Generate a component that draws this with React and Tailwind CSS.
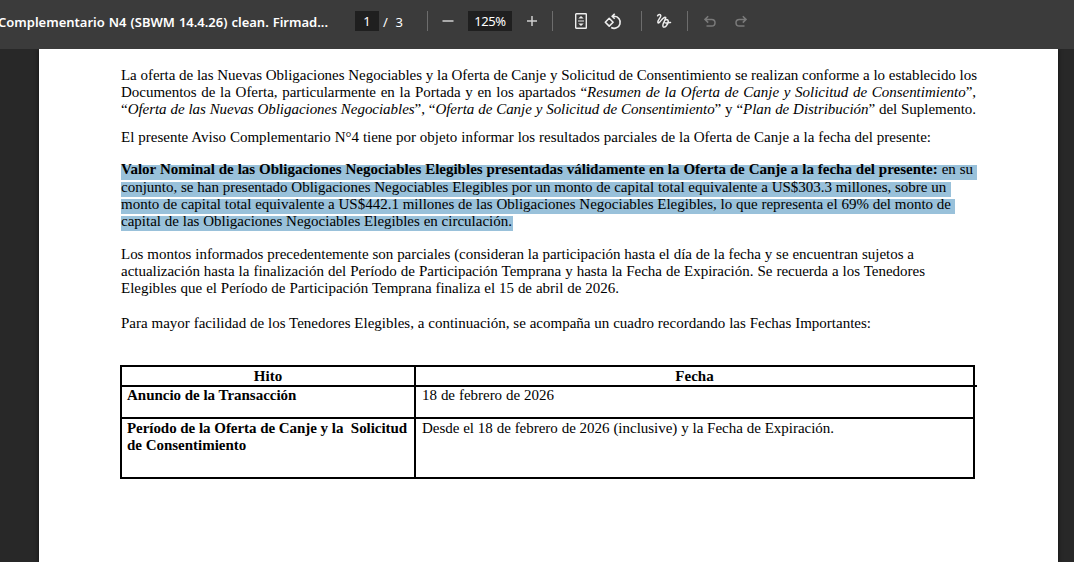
import React from "react";

const Line = ({ w, children, className = "tracking-[-0.02px]" }) => (
  <div
    className={`h-[17px] leading-[17px] whitespace-nowrap text-justify [text-align-last:justify] ${className}`}
    style={{ width: w }}
  >
    {children}
  </div>
);

const Marked = ({ w, pad, shift = "-mt-[3px]", gap = "", children }) => (
  <div className={`flex h-[15px] w-fit bg-[#99c1da] ${gap}`} style={{ paddingRight: pad }}>
    <Line w={w} className={shift}>{children}</Line>
  </div>
);

const Rule = ({ className = "" }) => <div className={`h-5 w-px shrink-0 bg-[#6d6d6d] ${className}`} />;

function Toolbar() {
  return (
    <header className="relative z-10 flex h-[49px] items-start bg-[#3b3b3b] pt-[11px] font-['Noto_Sans',sans-serif] text-white">
      <div className="-ml-[2px] h-5 w-[330px] shrink-0 text-[13px] leading-[22px] font-semibold whitespace-nowrap [text-align-last:justify]">
        Complementario N4 (SBWM 14.4.26) clean. Firmad...
      </div>
      <div className="ml-[27px] h-5 w-6 shrink-0 bg-[#1f1f1f] text-center text-[13px] leading-[21px]">1</div>
      <div className="ml-1 w-5 shrink-0 text-[13px] leading-[22px] [text-align-last:justify]">/ 3</div>
      <Rule className="ml-6" />
      <svg className="ml-[14px] h-5 w-3 shrink-0" viewBox="0 0 12 20" stroke="#d0d0d0" strokeWidth="1.5"><path d="M.5 10h11" /></svg>
      <div className="ml-[14px] h-5 w-11 shrink-0 bg-[#1f1f1f] text-center text-[13px] leading-[21px] tracking-[-0.4px]">125%</div>
      <svg className="ml-[14px] h-5 w-3 shrink-0" viewBox="0 0 12 20" stroke="#d0d0d0" strokeWidth="1.5"><path d="M1 10h10M6 5v10" /></svg>
      <Rule className="ml-[14px]" />
      <svg className="ml-[22px] h-5 w-3 shrink-0" viewBox="0 0 12 20" fill="none" stroke="#eeeeee">
        <rect x=".7" y="2.7" width="10.6" height="14.6" rx=".6" strokeWidth="1.4" />
        <path d="M3 10h6" strokeWidth="1" />
        <path d="M3.3 7.6 6 5 8.7 7.6zM3.3 12.4 6 15 8.7 12.4z" fill="#eeeeee" stroke="none" />
      </svg>
      <svg className="ml-[17px] h-5 w-[18px] shrink-0" viewBox="0 0 18 20" fill="none" stroke="#eeeeee" strokeWidth="1.6">
        <path d="M5.2 7.3 9.1 11.2 5.2 15.1 1.3 11.2z" strokeLinejoin="round" />
        <path d="M8 5.3h2.4a6 6 0 1 1-3.2 11.2M10.7 2.8 8.2 5.3l2.5 2.5" />
      </svg>
      <Rule className="ml-[19px]" />
      <svg className="ml-[14px] h-5 w-4 shrink-0" viewBox="0 0 16 20" fill="none" stroke="#eeeeee" strokeWidth="1.5" strokeLinecap="round" strokeLinejoin="round">
        <path d="M1.6 4.8C2.3 3.400 4.500 2.900 4.800 4.600 5.100 6.600 1.200 9.200 1.900 11.500c.9 2.500 4.500-5.200 7.100-5.300 2.700 0-3.200 6.300-2 9.100 1.300 2.600 5.400-1.900 5.200-5.200-.3-2.800-4.800-.9-3.900 1.200.8 1.700 3.500 0 6.200.2" />
      </svg>
      <Rule className="ml-[15px]" />
      <svg className="ml-4 h-5 w-3 shrink-0" viewBox="0 0 12 20" fill="none" stroke="#7a7a7a" strokeWidth="1.5">
        <path d="M4.2 5.200 1 8.400l3.200 3.200M1 8.400h6.700a3.300 3.300 0 0 1 0 6.600H2.500" />
      </svg>
      <svg className="ml-[19px] h-5 w-3 shrink-0" viewBox="0 0 12 20" fill="none" stroke="#7a7a7a" strokeWidth="1.5">
        <path d="M7.800 5.200 11 8.400l-3.200 3.200M11 8.400H4.300a3.300 3.300 0 0 0 0 6.600h5.200" />
      </svg>
    </header>
  );
}

export default function App() {
  return (
    <div className="h-[562px] w-[1074px] overflow-hidden bg-[#282828]">
      <Toolbar />
      <main className="ml-[39px] h-[513px] w-[1019px] bg-white pt-[18px] pl-[82px] font-['Liberation_Serif',serif] text-[15px] text-black shadow-[0_0_4px_#111]">
        <Line w={856} className="tracking-[-0.04px]">La oferta de las Nuevas Obligaciones Negociables y la Oferta de Canje y Solicitud de Consentimiento se realizan conforme a lo establecido los</Line>
        <Line w={855}>Documentos de la Oferta, particularmente en la Portada y en los apartados “<i>Resumen de la Oferta de Canje y Solicitud de Consentimiento</i>”,</Line>
        <Line w={855} className="tracking-[-0.04px]">“<i>Oferta de las Nuevas Obligaciones Negociables</i>”, “<i>Oferta de Canje y Solicitud de Consentimiento</i>” y “<i>Plan de Distribución</i>” del Suplemento.</Line>
        <Line w={810} className="mt-[11px]">El presente Aviso Complementario N°4 tiene por objeto informar los resultados parciales de la Oferta de Canje a la fecha del presente:</Line>

        <section className="mt-[19px]">
          <Marked w={852} pad={4} shift="-mt-1"><b>Valor Nominal de las Obligaciones Negociables Elegibles presentadas válidamente en la Oferta de Canje a la fecha del presente:</b> en su</Marked>
          <Marked w={825} pad={5} gap="mt-[2px]">conjunto, se han presentado Obligaciones Negociables Elegibles por un monto de capital total equivalente a US$303.3 millones, sobre un</Marked>
          <Marked w={830} pad={4} gap="mt-[2px]">monto de capital total equivalente a US$442.1 millones de las Obligaciones Negociables Elegibles, lo que representa el 69% del monto de</Marked>
          <Marked w={391} pad={1} gap="mt-[2px]">capital de las Obligaciones Negociables Elegibles en circulación.</Marked>
        </section>

        <section className="mt-[15px]">
          <Line w={793}>Los montos informados precedentemente son parciales (consideran la participación hasta el día de la fecha y se encuentran sujetos a</Line>
          <Line w={804}>actualización hasta la finalización del Período de Participación Temprana y hasta la Fecha de Expiración. Se recuerda a los Tenedores</Line>
          <Line w={498}>Elegibles que el Período de Participación Temprana finaliza el 15 de abril de 2026.</Line>
        </section>
        <Line w={750} className="mt-[18px]">Para mayor facilidad de los Tenedores Elegibles, a continuación, se acompaña un cuadro recordando las Fechas Importantes:</Line>

        <div className="-ml-px mt-[33px] grid h-[114px] w-[855px] grid-cols-[292px_557px] grid-rows-[18px_30px_58px] gap-[2px] border-2 border-black bg-black *:bg-white">
          <div className="text-center leading-[19px] font-bold">Hito</div>
          <div className="relative text-center leading-[19px] font-bold">
            Fecha
            <span className="absolute top-[18px] -right-1 h-[2px] w-1 bg-black" />
          </div>
          <div className="pl-[5px] font-bold"><Line w={169}>Anuncio de la Transacción</Line></div>
          <div className="pl-[6px]"><Line w={132}>18 de febrero de 2026</Line></div>
          <div className="pt-px pl-[5px] font-bold">
            <Line w={280} className="tracking-[-0.06px]">Período de la Oferta de Canje y la &nbsp;Solicitud</Line>
            <Line w={119}>de Consentimiento</Line>
          </div>
          <div className="pt-px pl-[6px]"><Line w={412}>Desde el 18 de febrero de 2026 (inclusive) y la Fecha de Expiración.</Line></div>
        </div>
      </main>
    </div>
  );
}
